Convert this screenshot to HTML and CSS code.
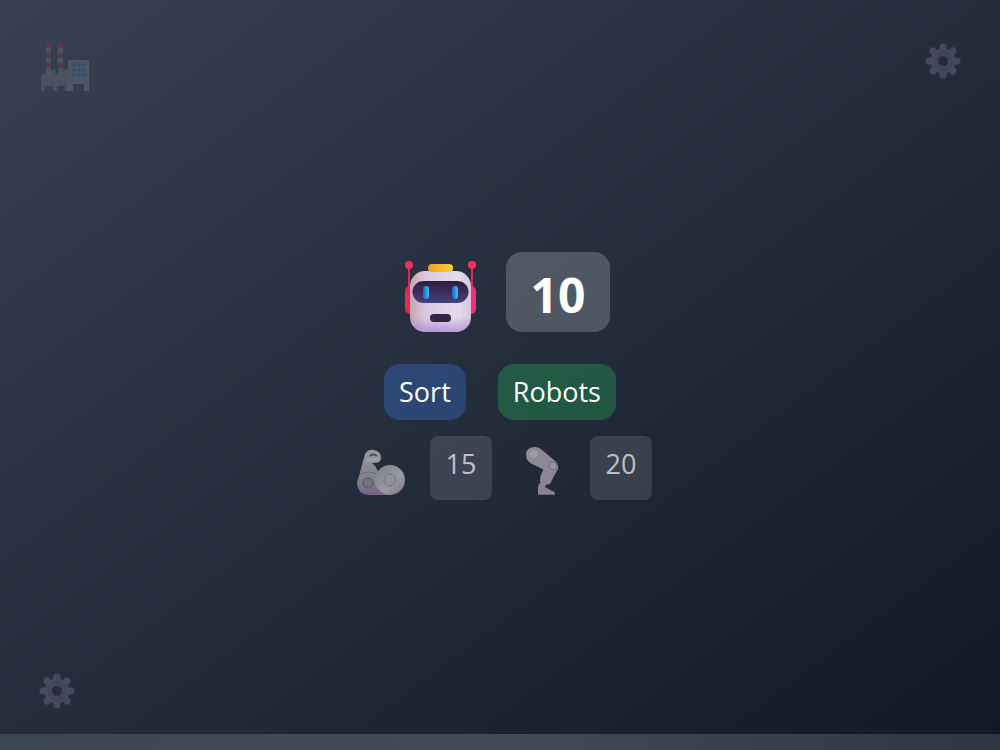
FILE: index.html
```html
<!DOCTYPE html>
<html lang="en">
<head>
    <meta charset="UTF-8">
    <meta name="viewport" content="width=device-width, initial-scale=1.0">
    <title>Robots</title>
    <link rel="stylesheet" href="styles.css">
</head>
<body>
    <!-- background decoration -->
    <svg class="deco factory" viewBox="0 0 48 48" aria-hidden="true">
        <path fill="#a9a3b0" d="M5 0h5v31H5zM17 0h5v31h-5z"/>
        <path fill="#f8155a" d="M5 1q0-1 1-1h3q1 0 1 1v4H5zM5 10h5v5H5zM5 20h5v5H5zM17 1q0-1 1-1h3q1 0 1 1v4h-5zM17 10h5v5h-5zM17 20h5v5h-5z"/>
        <path fill="#a59dae" d="M0 32l14-6v5l13-5v22H0z"/>
        <path fill="#bdb4c8" d="M27 19q0-2 2-2h17q2 0 2 2v29H27z"/>
        <g fill="#1ba0dc">
            <circle cx="33" cy="22" r="2"/>
            <circle cx="38" cy="22" r="2"/>
            <circle cx="43" cy="22" r="2"/>
            <circle cx="33" cy="27" r="2"/>
            <circle cx="38" cy="27" r="2"/>
            <circle cx="43" cy="27" r="2"/>
            <circle cx="33" cy="32" r="2"/>
            <circle cx="38" cy="32" r="2"/>
            <circle cx="43" cy="32" r="2"/>
        </g>
        <path fill="#433b6b" d="M4 43h8v5H4zM16 43h8v5h-8zM32 41h11v7H32z"/>
    </svg>
    <svg class="deco gear gear-top" viewBox="0 0 36 36" aria-hidden="true">
        <use href="#gear"/>
    </svg>
    <svg class="deco gear gear-bottom" viewBox="0 0 36 36" aria-hidden="true">
        <defs>
            <g id="gear">
                <g stroke="#aba2bd" stroke-width="7" stroke-linecap="round">
                    <path d="M18 4v6M18 26v6M4 18h6M26 18h6M8 8l4 4M24 24l4 4M28 8l-4 4M12 24l-4 4"/>
                </g>
                <circle cx="18" cy="18" r="9" fill="none" stroke="#aba2bd" stroke-width="7"/>
                <circle cx="18" cy="18" r="8" fill="none" stroke="#9d92aa" stroke-width="5"/>
            </g>
        </defs>
        <use href="#gear"/>
    </svg>

    <main>
        <div class="row">
            <svg class="robot" viewBox="0 0 100 80" role="img" aria-label="Robot">
                <defs>
                    <linearGradient id="head" x2="1">
                        <stop offset="0" stop-color="#c9a3ad"/>
                        <stop offset=".25" stop-color="#d8cbe0"/>
                        <stop offset=".8" stop-color="#e5dcea"/>
                        <stop offset="1" stop-color="#d3c5de"/>
                    </linearGradient>
                    <linearGradient id="chin" x2="0" y2="1">
                        <stop offset=".75" stop-color="#b78be0" stop-opacity="0"/>
                        <stop offset="1" stop-color="#b084dc" stop-opacity=".8"/>
                    </linearGradient>
                    <linearGradient id="visor" x2="0" y2="1">
                        <stop offset="0" stop-color="#301b3c"/>
                        <stop offset="1" stop-color="#464080"/>
                    </linearGradient>
                    <linearGradient id="lamp" x2="1">
                        <stop offset="0" stop-color="#f09a2b"/>
                        <stop offset="1" stop-color="#ffd03c"/>
                    </linearGradient>
                    <linearGradient id="eye" x2="1">
                        <stop offset="0" stop-color="#1769bb"/>
                        <stop offset=".6" stop-color="#2b9be8"/>
                        <stop offset="1" stop-color="#46b9ee"/>
                    </linearGradient>
                </defs>
                <path stroke="#d52b5f" stroke-width="2" d="M19 14v22M82 14v22"/>
                <circle cx="19" cy="13" r="4" fill="#f3305a"/>
                <circle cx="82" cy="13" r="4" fill="#f3305a"/>
                <rect x="15" y="34" width="12" height="28" rx="5" fill="#df2a5c"/>
                <rect x="74" y="34" width="12" height="28" rx="5" fill="#f52f7d"/>
                <rect x="20" y="19" width="61" height="61" rx="15" fill="url(#head)"/>
                <rect x="20" y="19" width="61" height="61" rx="15" fill="url(#chin)"/>
                <rect x="38" y="12" width="25" height="8" rx="4" fill="url(#lamp)"/>
                <rect x="22.5" y="29" width="56" height="22" rx="11" fill="url(#visor)"/>
                <rect x="33" y="34" width="6" height="13" rx="3" fill="url(#eye)"/>
                <rect x="62" y="34" width="6" height="13" rx="3" fill="url(#eye)"/>
                <rect x="40" y="62" width="21" height="8" rx="4" fill="#352346"/>
            </svg>
            <div class="count">10</div>
        </div>

        <div class="row buttons">
            <button class="sort">Sort</button>
            <button class="robots">Robots</button>
        </div>

        <div class="row parts">
            <div class="part">
                <svg class="arm" viewBox="0 0 66 64" role="img" aria-label="Arm">
                    <defs>
                        <linearGradient id="metal" x2="0" y2="1">
                            <stop offset="0" stop-color="#c9c6cb"/>
                            <stop offset=".65" stop-color="#aaa5ae"/>
                            <stop offset="1" stop-color="#9a79ad"/>
                        </linearGradient>
                        <linearGradient id="ball" x2="1" y2="1">
                            <stop offset="0" stop-color="#a7a2aa"/>
                            <stop offset=".6" stop-color="#cac7cc"/>
                            <stop offset="1" stop-color="#a491b3"/>
                        </linearGradient>
                    </defs>
                    <path fill="url(#metal)" d="M17 18q3-5 9-4 8 2 7 9-1 4-6 4h-3q4 3 6 9l12 23H20q-10-1-11-11 0-3 2-8z"/>
                    <path fill="none" stroke="#56555f" stroke-width="2" d="M22 20q3-3 7 0"/>
                    <path stroke="#d1ced4" stroke-width="4" stroke-linecap="round" d="M20 24l9-1"/>
                    <path fill="none" stroke="#8c8892" d="M12 38q9-4 17 0"/>
                    <circle cx="42" cy="44" r="15" fill="url(#ball)"/>
                    <circle cx="42" cy="44" r="6" fill="#bfbcc4" stroke="#99949f"/>
                    <circle cx="20" cy="47" r="5" fill="#96939b" stroke="#67646e"/>
                </svg>
                <div class="amount">15</div>
            </div>
            <div class="part">
                <svg class="leg" viewBox="0 0 50 64" role="img" aria-label="Leg">
                    <path fill="#b6b0bd" d="M21 31l13-2q-1 7-4 11l-4 8q-8 2-10-3 0-7 5-14z"/>
                    <path fill="#bbb3c1" d="M2 19q0-8 9-8 4 0 7 3l12 10q5 4 4 9-3 6-9 3L8 28q-6-3-6-9z"/>
                    <circle cx="10" cy="18" r="4" fill="#d0ccd5"/>
                    <circle cx="29" cy="30" r="4" fill="#c7c2cc" stroke="#8f8996"/>
                    <path fill="#b1abb8" d="M18 45h4v4l-1 2 7 4q3 0 3 4H14v-8q1-4 4-6z"/>
                    <path fill="#9880aa" d="M14 58h17v1H14z"/>
                </svg>
                <div class="amount">20</div>
            </div>
        </div>
    </main>

    <div class="floor"></div>
</body>
</html>
```

FILE: styles.css
```css
* {
    box-sizing: border-box;
}
body {
    margin: 0;
    min-height: 100vh;
    position: relative;
    display: flex;
    flex-direction: column;
    font-family: "Segoe UI", "Open Sans", "Noto Sans", sans-serif;
    color: #fff;
    background: linear-gradient(to bottom right, #374151, #111827);
}
main {
    flex: 1;
    display: flex;
    flex-direction: column;
    align-items: center;
    justify-content: center;
    padding-top: 18px;
}
.row {
    display: flex;
    justify-content: center;
    gap: 16px;
}
.robot {
    width: 100px;
    height: 80px;
}
.count {
    padding: 19px 24px 13px;
    border-radius: 16px;
    background: rgba(255, 255, 255, 0.2);
    font-size: 48px;
    font-weight: bold;
    line-height: 48px;
    min-width: 104px;
    text-align: center;
}
.buttons {
    gap: 32px;
    margin: 32px 0 16px;
}
button {
    padding: 10px 15px;
    border: none;
    border-radius: 16px;
    font-family: inherit;
    font-size: 27px;
    line-height: 36px;
    color: #fff;
    cursor: pointer;
}
.sort {
    background: rgba(59, 130, 246, 0.3);
}
.robots {
    background: rgba(34, 197, 94, 0.3);
}
.parts {
    gap: 32px;
    opacity: 0.7;
}
.part {
    display: flex;
    gap: 16px;
}
.arm {
    width: 66px;
    height: 64px;
}
.leg {
    width: 50px;
    height: 64px;
}
.amount {
    min-width: 62px;
    height: 64px;
    padding: 10px 15px;
    border-radius: 8px;
    background: rgba(255, 255, 255, 0.17);
    font-size: 27px;
    line-height: 36px;
    text-align: center;
}
.deco {
    position: absolute;
    opacity: 0.2;
}
.factory {
    top: 43px;
    left: 41px;
    width: 48px;
    height: 48px;
}
.gear {
    width: 36px;
    height: 36px;
    opacity: 0.25;
}
.gear-top {
    top: 43px;
    right: 39px;
}
.gear-bottom {
    bottom: 41px;
    left: 39px;
}
.floor {
    height: 16px;
    background: linear-gradient(to right, #3b4655, #434958, #2d3746);
}
```
